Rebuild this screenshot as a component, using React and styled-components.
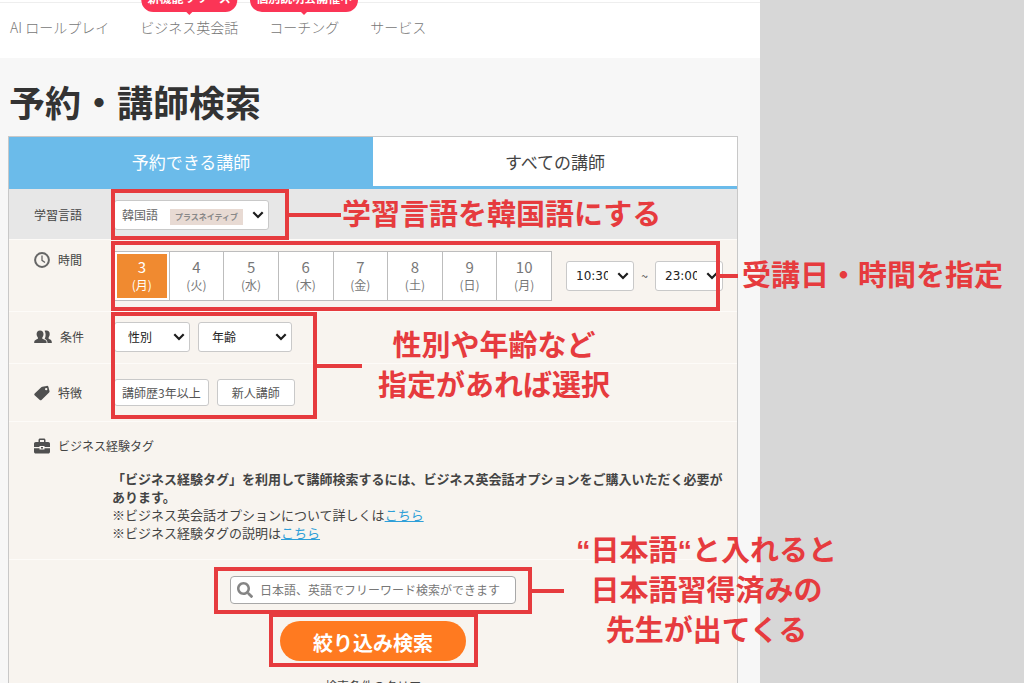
import { useState } from "react";
import styled, { createGlobalStyle } from "styled-components";
import { FaSearch } from "react-icons/fa";

const days = [
  { date: 3, week: "月" },
  { date: 4, week: "火" },
  { date: 5, week: "水" },
  { date: 6, week: "木" },
  { date: 7, week: "金" },
  { date: 8, week: "土" },
  { date: 9, week: "日" },
  { date: 10, week: "月" },
];

export default function App() {
  const [tab, setTab] = useState("available");
  const [day, setDay] = useState(3);

  return (
    <>
      <GlobalStyle />
      <Page>
        <Site>
          <Nav>
            <NavLink href="#roleplay">AI ロールプレイ</NavLink>
            <NavLink href="#business">
              <Badge>新機能リリース</Badge>
              ビジネス英会話
            </NavLink>
            <NavLink href="#coaching">
              <Badge>個別説明会開催中</Badge>
              コーチング
            </NavLink>
            <NavLink href="#service">サービス</NavLink>
          </Nav>
          <Title>予約・講師検索</Title>
          <Card>
            <Tabs>
              <Tab $active={tab === "available"} onClick={() => setTab("available")}>
                予約できる講師
              </Tab>
              <Tab $active={tab === "all"} onClick={() => setTab("all")}>
                すべての講師
              </Tab>
            </Tabs>

            <LanguageRow>
              <Label htmlFor="language">学習言語</Label>
              <Marked>
                <SelectBox $width={155}>
                  <Select id="language" $muted>
                    <option>韓国語</option>
                  </Select>
                  <PlusTag>プラスネイティブ</PlusTag>
                  <Chevron />
                </SelectBox>
                <Highlight $inset="-11px -20px -10px -3px">
                  <Callout>
                    <Line $width={52} />
                    <Note $gap={1}>学習言語を韓国語にする</Note>
                  </Callout>
                </Highlight>
              </Marked>
            </LanguageRow>

            <TimeRow>
              <Label as="span">
                <ClockIcon />
                時間
              </Label>
              <TimeFields>
                <Days>
                  {days.map((item) => (
                    <Day
                      key={item.date}
                      $active={item.date === day}
                      onClick={() => setDay(item.date)}
                    >
                      <DayInner $active={item.date === day}>
                        <span>{item.date}</span>
                        <small>({item.week})</small>
                      </DayInner>
                    </Day>
                  ))}
                </Days>
                <SelectBox $width={68}>
                  <Select $time aria-label="開始時間">
                    <option>10:30</option>
                  </Select>
                  <Chevron />
                </SelectBox>
                <Tilde>~</Tilde>
                <SelectBox $width={68}>
                  <Select $time aria-label="終了時間">
                    <option>23:00</option>
                  </Select>
                  <Chevron />
                </SelectBox>
                <Highlight $inset="-10px 3px -10px -3px">
                  <Callout>
                    <Line $width={18} />
                    <Note $gap={4}>受講日・時間を指定</Note>
                  </Callout>
                </Highlight>
              </TimeFields>
            </TimeRow>

            <ConditionRow>
              <Label as="span">
                <UsersIcon />
                条件
              </Label>
              <Marked>
                <SelectBox $width={76}>
                  <Select aria-label="性別">
                    <option>性別</option>
                  </Select>
                  <Chevron />
                </SelectBox>
                <SelectBox $width={94}>
                  <Select aria-label="年齢">
                    <option>年齢</option>
                  </Select>
                  <Chevron />
                </SelectBox>
                <Highlight $inset="-10px -25px -67px -3px">
                  <Callout>
                    <Line $width={45} />
                    <Note $gap={16}>
                      性別や年齢など
                      <br />
                      指定があれば選択
                    </Note>
                  </Callout>
                </Highlight>
              </Marked>
            </ConditionRow>

            <FeatureRow>
              <Label as="span">
                <TagIcon />
                特徴
              </Label>
              <Marked>
                <Feature>講師歴3年以上</Feature>
                <Feature $wide>新人講師</Feature>
              </Marked>
            </FeatureRow>

            <BusinessRow>
              <Label as="span">
                <BriefcaseIcon />
                ビジネス経験タグ
              </Label>
              <Description>
                <b>
                  「ビジネス経験タグ」を利用して講師検索するには、ビジネス英会話オプションをご購入いただく必要が
                  <br />
                  あります。
                </b>
                <br />
                ※ビジネス英会話オプションについて詳しくは<a href="#option">こちら</a>
                <br />
                ※ビジネス経験タグの説明は<a href="#tags">こちら</a>
              </Description>
            </BusinessRow>

            <SearchArea>
              <SearchBox>
                <FaSearch size={16} />
                <SearchInput
                  type="text"
                  aria-label="フリーワード"
                  placeholder="日本語、英語でフリーワード検索ができます"
                />
                <Highlight $inset="-10px -17px -11px -17px">
                  <Callout>
                    <Line $width={32} />
                    <Note $gap={12}>
                      “日本語“と入れると
                      <br />
                      日本語習得済みの
                      <br />
                      先生が出てくる
                    </Note>
                  </Callout>
                </Highlight>
              </SearchBox>
              <Marked>
                <SubmitButton>絞り込み検索</SubmitButton>
                <Highlight $inset="-8px -12px -6px -11px" />
              </Marked>
              <ClearButton>検索条件のクリア</ClearButton>
            </SearchArea>
          </Card>
        </Site>
      </Page>
    </>
  );
}

function Chevron() {
  return (
    <ChevronSvg width="12" height="8" viewBox="0 0 12 8">
      <path d="M1.300 1.300L6 6l4.700-4.700" fill="none" stroke="#1c1c1c" strokeWidth="2.200" />
    </ChevronSvg>
  );
}

function ClockIcon() {
  return (
    <svg width="16" height="16" viewBox="0 0 16 16" fill="none" stroke="#666">
      <circle cx="8" cy="8" r="6.900" strokeWidth="2" />
      <path d="M8 3.600V8.400L11 10.500" strokeWidth="1.300" />
    </svg>
  );
}

function UsersIcon() {
  return (
    <svg width="18" height="14" viewBox="0 0 18 14" fill="#505050">
      <path d="M10.600.8C11.200.5 11.800.4 12.500.4c2.100 0 3.300 1.400 3.200 3.600 0 1.700-.6 2.700-1.100 3.500v1.200c1.400.7 3.200 1.100 3.200 3.200V13h-4.300c0-2.400-1.100-3.400-2.800-4.200 1.200-2 1.300-5.800-.1-8z" />
      <path d="M6 .4C8.300.4 9.500 1.900 9.500 4c0 1.600-.5 2.700-1.200 3.500v1.300c1.500.8 4.300 1.200 4.300 3.300V13H.2v-.9c0-2.100 2.300-2.500 3.700-3.300V7.500C3.200 6.600 2.600 5.600 2.600 4 2.600 1.900 3.800.4 6 .4z" />
    </svg>
  );
}

function TagIcon() {
  return (
    <svg width="16" height="16" viewBox="0 0 16 16" fill="#505050">
      <path
        fillRule="evenodd"
        d="M8.300 1.800l4.400-.9c.8-.2 1.400.2 1.700.9l1.100 4.200c.2.600 0 1.100-.4 1.500l-7.600 7.400c-.5.500-1.200.500-1.700 0L.600 10.200c-.5-.6-.4-1.300.1-1.800l6.300-5.900c.4-.4.800-.6 1.300-.7zM12.200 2.900a1.200 1.200 0 1 0 0 2.400 1.200 1.200 0 0 0 0-2.400z"
      />
    </svg>
  );
}

function BriefcaseIcon() {
  return (
    <svg width="16" height="16" viewBox="0 0 16 16" fill="#505050">
      <path
        fillRule="evenodd"
        d="M4.500 4V2.200C4.500 1.200 5.200.5 6.200.5h3.600c1 0 1.700.7 1.700 1.700V4h2.700c1 0 1.800.8 1.800 1.800V9h-5.500V8H5.500v1H0V5.800C0 4.800.8 4 1.800 4zM6 4h4V2H6z"
      />
      <path d="M0 10.200h5.500v1.300h5v-1.300H16v3.500c0 1-.8 1.800-1.800 1.800H1.800c-1 0-1.800-.8-1.800-1.800z" />
      <rect x="7" y="9" width="2" height="1.500" />
    </svg>
  );
}

const GlobalStyle = createGlobalStyle`
  * {
    box-sizing: border-box;
  }
  body {
    margin: 0;
    background-color: #d7d7d7;
    color: #444;
    font-family: "Noto Sans CJK JP", sans-serif;
    font-size: 12px;
    line-height: 18px;
  }
  button, input, select {
    margin: 0;
    font: inherit;
  }
`;

const Page = styled.div`
  height: 100vh;
  padding-right: 264px;
  overflow: hidden;
`;

const Site = styled.div`
  min-height: 100%;
  background-color: #f7f7f7;
`;

const Nav = styled.nav`
  display: flex;
  align-items: center;
  gap: 31px;
  height: 58px;
  padding: 0 10px 6px;
  border-top: 2px solid #fff;
  background-color: #fff;
  box-shadow: inset 0 1px 0 #eee;
`;

const NavLink = styled.a`
  position: relative;
  color: #777;
  font-size: 14px;
  font-weight: 300;
  text-decoration: none;
  white-space: nowrap;
`;

const Badge = styled.span`
  position: absolute;
  bottom: 24px;
  left: 50%;
  padding: 0 6px 4px;
  border-radius: 12px;
  background-color: #fb3556;
  color: #fff;
  font-size: 12px;
  font-weight: 700;
  line-height: 20px;
  transform: translateX(-50%);
  &::after {
    content: "";
    position: absolute;
    top: 100%;
    left: 50%;
    border: 3px solid transparent;
    border-top-color: #fb3556;
    transform: translateX(-50%);
  }
`;

const Title = styled.h1`
  margin: 0;
  padding: 20px 9px 12px;
  color: #333;
  font-size: 36px;
  font-weight: 700;
  line-height: 46px;
`;

const Card = styled.section`
  margin: 0 22px 0 8px;
  border: 1px solid #c8c8c8;
  background-color: #f8f4ef;
`;

const Tabs = styled.div`
  display: grid;
  grid-template-columns: 1fr 1fr;
`;

const Tab = styled.button`
  height: 52px;
  padding: 0;
  border: 0;
  border-bottom: 3px solid #6bbbea;
  background-color: ${(props) => (props.$active ? "#6bbbea" : "#fff")};
  color: ${(props) => (props.$active ? "#fff" : "#444")};
  font-size: 17px;
  cursor: pointer;
`;

const Row = styled.div`
  display: grid;
  grid-template-columns: 105px 1fr;
  align-items: center;
  border-bottom: 1px solid #fdfbf8;
`;

const LanguageRow = styled(Row)`
  padding: 11px 0 9px;
  background-color: #e7e7e7;
`;

const TimeRow = styled(Row)`
  align-items: start;
  padding: 11px 14px 10px 0;
`;

const ConditionRow = styled(Row)`
  padding: 10px 0 11px;
`;

const FeatureRow = styled(Row)`
  padding: 15px 0;
`;

const BusinessRow = styled.div`
  padding: 15px 0 17px;
  border-bottom: 1px solid #fdfbf8;
`;

const Label = styled.label`
  display: flex;
  align-items: center;
  gap: 8px;
  padding-left: 25px;
  color: #444;
`;

const Marked = styled.div`
  position: relative;
  display: flex;
  gap: 8px;
  justify-self: start;
`;

const TimeFields = styled.div`
  position: relative;
  display: flex;
  align-items: center;
`;

const SelectBox = styled.div`
  position: relative;
  width: ${(props) => props.$width}px;
`;

const Select = styled.select`
  display: block;
  width: 100%;
  height: 30px;
  padding: ${(props) => (props.$time ? "0 25px 0 9px" : props.$muted ? "0 7px" : "0 13px")};
  border: 1px solid #c9c9c9;
  border-radius: 3px;
  background-color: #fff;
  color: ${(props) => (props.$muted ? "#666" : "#222")};
  font-family: ${(props) => (props.$time ? '"DejaVu Sans", sans-serif' : "inherit")};
  appearance: none;
`;

const ChevronSvg = styled.svg`
  position: absolute;
  top: 11px;
  right: 5px;
  pointer-events: none;
`;

const PlusTag = styled.span`
  position: absolute;
  top: 9px;
  left: 56px;
  width: 73px;
  background-color: #e8dad3;
  color: #888;
  font-size: 8px;
  font-weight: 700;
  line-height: 16px;
  text-align: center;
  white-space: nowrap;
  pointer-events: none;
`;

const Days = styled.div`
  display: flex;
  flex: 1;
  margin-right: 14px;
  border: 1px solid #bdbdbd;
`;

const Day = styled.button`
  flex: 1;
  height: 48px;
  padding: 2px;
  border: 0;
  background-color: #fff;
  cursor: pointer;
  & + & {
    border-left: 1px solid #bdbdbd;
  }
`;

const DayInner = styled.span`
  display: flex;
  flex-direction: column;
  align-items: center;
  justify-content: center;
  height: 44px;
  background-color: ${(props) => (props.$active ? "#f08a30" : "transparent")};
  color: ${(props) => (props.$active ? "#fff" : "#777")};
  font-size: 15px;
  small {
    font-size: 12px;
  }
`;

const Tilde = styled.span`
  width: 21px;
  text-align: center;
`;

const Feature = styled.button`
  height: 27px;
  padding: 0 ${(props) => (props.$wide ? "14px" : "7px")};
  border: 1px solid #c9c9c9;
  border-radius: 3px;
  background-color: #fff;
  color: #555;
  cursor: pointer;
`;

const Description = styled.p`
  margin: 15px 0 0 103px;
  font-size: 13px;
  white-space: nowrap;
  a {
    color: #2f9fd8;
  }
`;

const SearchArea = styled.div`
  display: flex;
  flex-direction: column;
  align-items: center;
  padding: 16px 0 20px;
`;

const SearchBox = styled.div`
  position: relative;
  display: flex;
  align-items: center;
  gap: 7px;
  width: 286px;
  height: 28px;
  margin-bottom: 17px;
  padding: 0 6px;
  border: 1px solid #a8a8a8;
  border-radius: 4px;
  background-color: #fff;
  color: #858585;
`;

const SearchInput = styled.input`
  flex: 1;
  min-width: 0;
  padding: 0;
  border: 0;
  outline: 0;
  background: none;
  &::placeholder {
    color: #777;
  }
`;

const SubmitButton = styled.button`
  width: 186px;
  height: 40px;
  padding: 4px 0 0;
  border: 0;
  border-radius: 20px;
  background-color: #ff7a20;
  color: #fff;
  font-size: 20px;
  font-weight: 700;
  cursor: pointer;
`;

const ClearButton = styled.button`
  margin-top: 16px;
  padding: 0;
  border: 0;
  background: none;
  color: #444;
  cursor: pointer;
`;

const Highlight = styled.div`
  position: absolute;
  inset: ${(props) => props.$inset};
  z-index: 1;
  border: 4px solid #e63b3e;
  pointer-events: none;
`;

const Callout = styled.div`
  position: absolute;
  top: 50%;
  left: calc(100% + 4px);
  display: flex;
  align-items: center;
  transform: translateY(-50%);
`;

const Line = styled.span`
  width: ${(props) => props.$width}px;
  height: 4px;
  background-color: #e63b3e;
`;

const Note = styled.p`
  margin: 0 0 0 ${(props) => props.$gap}px;
  color: #e63b3e;
  font-family: "Liberation Sans", "Noto Sans CJK JP", sans-serif;
  font-size: 29px;
  font-weight: 700;
  line-height: 40px;
  text-align: center;
  white-space: nowrap;
`;
